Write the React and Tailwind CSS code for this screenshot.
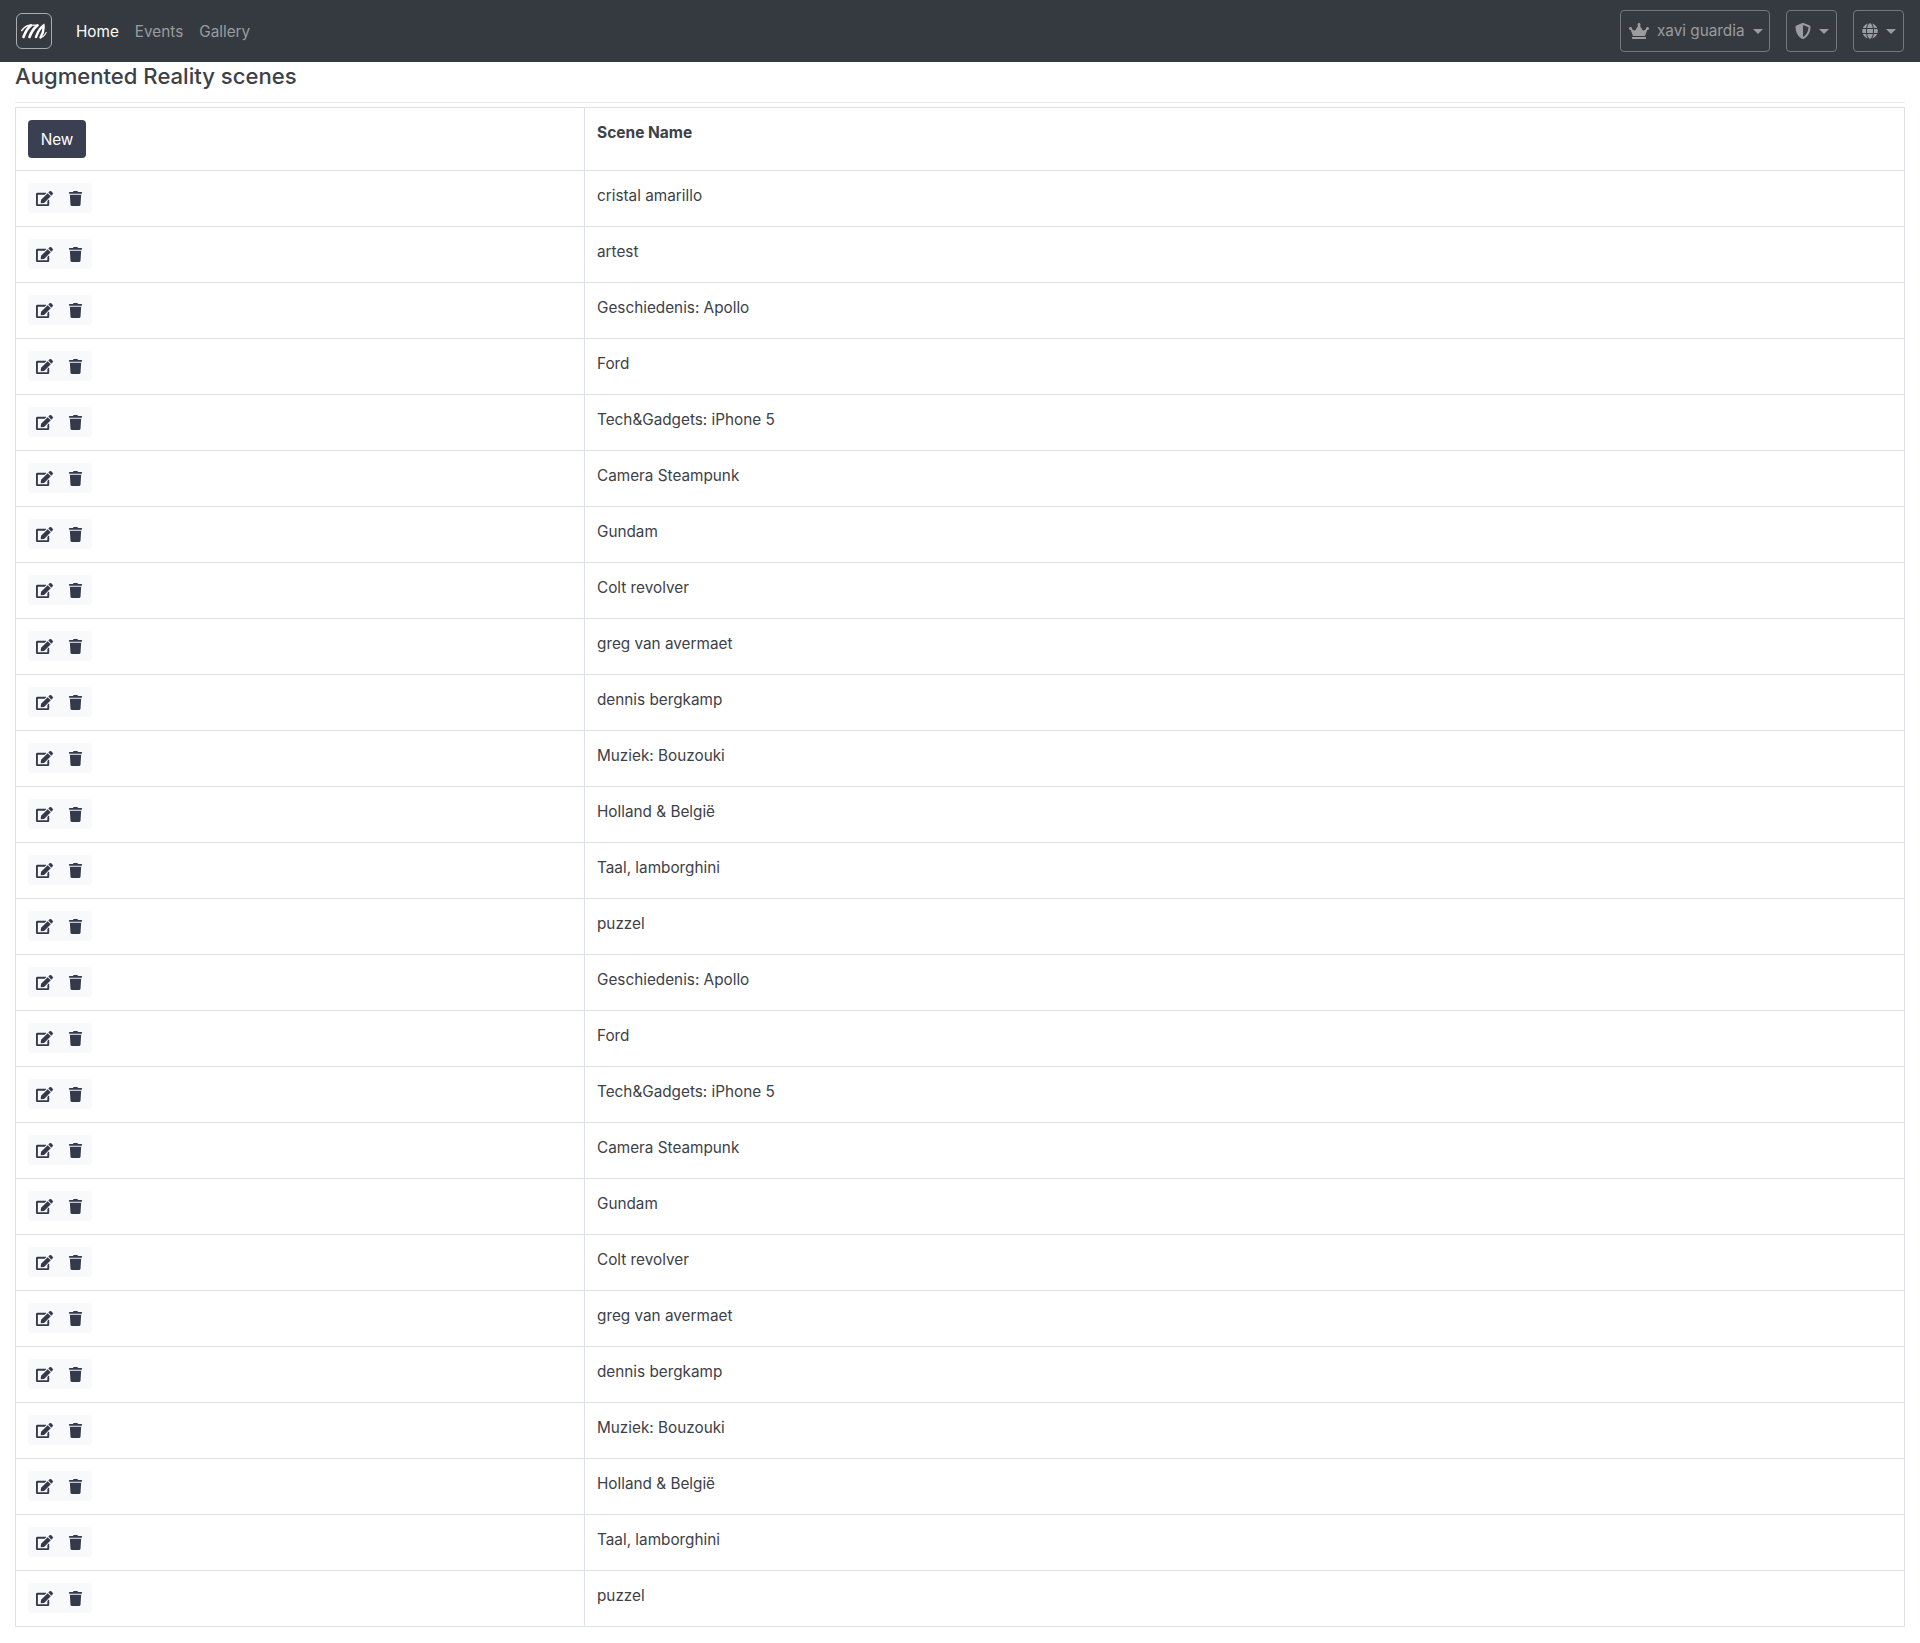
import { FaCrown, FaEdit, FaGlobe, FaShieldAlt, FaTrash } from "react-icons/fa";

const scenes = [
  "cristal amarillo",
  "artest",
  "Geschiedenis: Apollo",
  "Ford",
  "Tech&Gadgets: iPhone 5",
  "Camera Steampunk",
  "Gundam",
  "Colt revolver",
  "greg van avermaet",
  "dennis bergkamp",
  "Muziek: Bouzouki",
  "Holland & België",
  "Taal, lamborghini",
  "puzzel",
  "Geschiedenis: Apollo",
  "Ford",
  "Tech&Gadgets: iPhone 5",
  "Camera Steampunk",
  "Gundam",
  "Colt revolver",
  "greg van avermaet",
  "dennis bergkamp",
  "Muziek: Bouzouki",
  "Holland & België",
  "Taal, lamborghini",
  "puzzel",
];

function Logo() {
  return (
    <span className="flex h-[36px] w-[36px] items-center justify-center rounded-[6px] border border-[#a9adb1]">
      <svg viewBox="0 0 26 16" className="h-[16px] w-[26px]" fill="none" stroke="white" strokeLinecap="round">
        <path d="M0.8 7.5 C3 4 6 2.5 9 2.2" strokeWidth="1.5" />
        <path d="M2.5 14 C4 10 6.5 5 10 2.4" strokeWidth="2.6" />
        <path d="M8.5 14 C10 10 13 5 16.5 2.4" strokeWidth="2.6" />
        <path d="M10 2.4 C13 2 15 2 16.5 2.4" strokeWidth="1.2" />
        <path d="M15 14 C16.5 10 19 5 22.5 2.6 C23 6 21.5 11 19.5 14.5" strokeWidth="2.4" />
        <path d="M19.5 14.5 C21.5 14.5 23.5 12.5 25.2 9.5" strokeWidth="1.1" />
      </svg>
    </span>
  );
}

function NavButton({ children, className }) {
  return (
    <button
      type="button"
      className={`flex h-[42px] items-center rounded-[4px] border border-[#74787c] text-[#9a9c9f] ${className}`}
    >
      {children}
      <span className="ml-[8px] h-0 w-0 border-x-[5px] border-t-[5px] border-x-transparent border-t-current" />
    </button>
  );
}

function Navbar() {
  return (
    <nav className="flex h-[62px] items-center bg-[#343a40] pl-[16px] pr-[16px]">
      <Logo />
      <div className="ml-[24px] flex gap-[16px] pt-[1px]">
        <a className="text-white">Home</a>
        <a className="text-[#9a9c9f]">Events</a>
        <a className="text-[#9a9c9f]">Gallery</a>
      </div>
      <div className="ml-auto flex gap-[16px]">
        <NavButton className="w-[150px] pl-[8px]">
          <FaCrown className="mr-[8px] text-[20px]" />
          <span>xavi guardia</span>
        </NavButton>
        <NavButton className="w-[51px] pl-[8px]">
          <FaShieldAlt className="text-[16px]" />
        </NavButton>
        <NavButton className="w-[51px] pl-[8px]">
          <FaGlobe className="text-[16px]" />
        </NavButton>
      </div>
    </nav>
  );
}

function SceneRow({ name }) {
  return (
    <tr>
      <td className="h-[56px] border border-[#dee2e6] px-[12px] py-0 align-middle">
        <div className="inline-flex rounded-[4px] bg-[#f8f9fa] text-[#343a4a]">
          <button type="button" className="flex h-[30px] w-[32px] items-center justify-center pl-[1px] text-[17px]">
            <FaEdit />
          </button>
          <button type="button" className="flex h-[30px] w-[32px] items-center justify-center pr-[1px] text-[15px]">
            <FaTrash />
          </button>
        </div>
      </td>
      <td className="h-[56px] border border-[#dee2e6] px-[12px] pt-[13px] align-top text-[#3c4148]">{name}</td>
    </tr>
  );
}

export default function App() {
  return (
    <div className="min-h-[1643px] bg-white font-['Inter',sans-serif] text-[15.3px] leading-[24px]">
      <Navbar />
      <main className="px-[15px]">
        <h1 className="text-[22.1px] font-medium leading-[28px] text-[#3c4148]">Augmented Reality scenes</h1>
        <hr className="mt-[12px] border-[#e9ecef]" />
        <table className="mt-[4px] w-full table-fixed border-collapse">
          <thead>
            <tr>
              <th className="h-[63px] w-[569px] border border-[#dee2e6] px-[12px] py-0 text-left align-middle">
                <button
                  type="button"
                  className="h-[38px] w-[58px] rounded-[4px] bg-[#3a3f51] pt-[1px] font-normal text-white"
                >
                  New
                </button>
              </th>
              <th className="h-[63px] border border-[#dee2e6] px-[12px] pt-[13px] text-left align-top text-[15.5px] font-bold text-[#3c4148]">
                Scene Name
              </th>
            </tr>
          </thead>
          <tbody>
            {scenes.map((name, i) => (
              <SceneRow key={i} name={name} />
            ))}
          </tbody>
        </table>
      </main>
    </div>
  );
}
